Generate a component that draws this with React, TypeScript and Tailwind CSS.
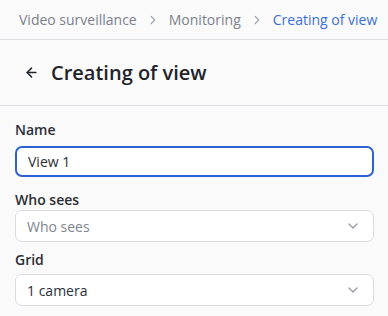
import React from "react";
import { ArrowLeft, ChevronDown, ChevronRight } from "lucide-react";

const crumbs = ["Video surveillance", "Monitoring"];

function SelectBox({ value, placeholder }: { value?: string; placeholder?: boolean }) {
  return (
    <div className="flex h-[32px] items-center justify-between rounded-[7px] border border-[#d8dbe2] bg-white pl-[11px] pr-[12px]">
      <span className={placeholder ? "text-[14px] text-[#80858f]" : "text-[14px] text-[#2b2f36]"}>{value}</span>
      <ChevronDown size={16} strokeWidth={2.2} className="text-[#9aa0ab]" />
    </div>
  );
}

export default function App() {
  return (
    <div className="h-[316px] w-[388px] overflow-hidden bg-[#fafafa] font-['Open_Sans',sans-serif]">
      {/* breadcrumbs */}
      <div className="flex h-[40px] items-center gap-[9px] border-b border-[#dcdee3] pl-[19px] text-[14px]">
        {crumbs.map((c) => (
          <React.Fragment key={c}>
            <span className="text-[#7c818b]">{c}</span>
            <ChevronRight size={14} strokeWidth={2.2} className="text-[#a2a7b0]" />
          </React.Fragment>
        ))}
        <span className="text-[#3c6fd8]">Creating of view</span>
      </div>

      {/* title */}
      <div className="flex h-[66px] items-center gap-[12px] border-b border-[#dcdee3] pl-[24px]">
        <ArrowLeft size={15} strokeWidth={2.4} className="text-[#23272e]" />
        <h1 className="text-[20px] font-semibold text-[#1f232a]">Creating of view</h1>
      </div>

      {/* form */}
      <div className="flex flex-col pl-[15px] pr-[14px] pt-[14px]">
        <label className="mb-[6px] text-[14px] font-semibold leading-[20px] text-[#2b2f36]">Name</label>
        <input
          defaultValue="View 1"
          className="h-[31px] rounded-[7px] border-2 border-[#2f62d0] bg-white px-[11px] text-[14px] text-[#2b2f36] outline-none"
        />
        <label className="mt-[13px] text-[14px] font-semibold leading-[20px] text-[#2b2f36]">Who sees</label>
        <SelectBox value="Who sees" placeholder />
        <label className="mb-[4px] mt-[8px] text-[14px] font-semibold leading-[20px] text-[#2b2f36]">Grid</label>
        <SelectBox value="1 camera" />
      </div>
    </div>
  );
}
